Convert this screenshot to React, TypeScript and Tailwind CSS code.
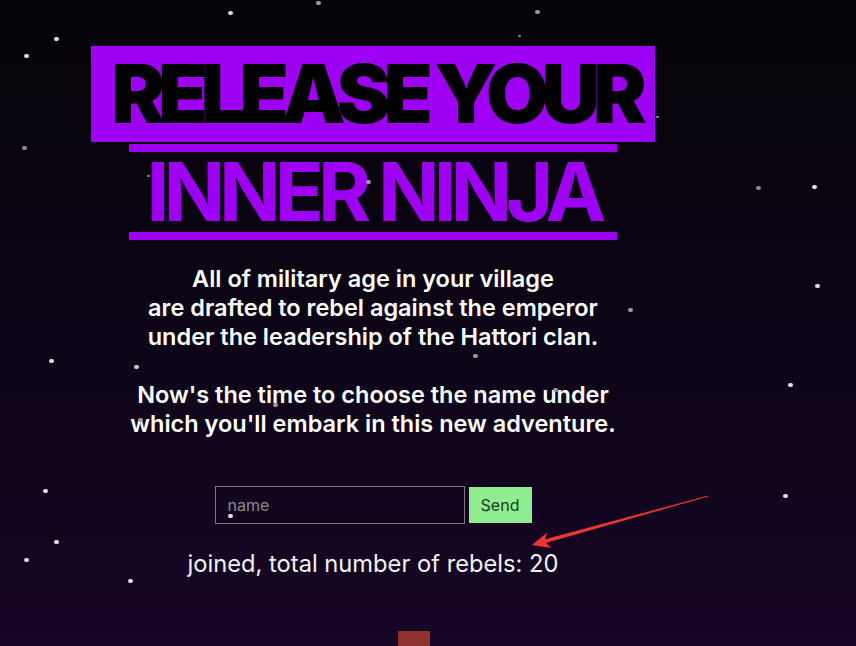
import React from "react";

const stars: [number, number, number, string][] = [
  [230, 13, 4, "#d8d8d8"],
  [318, 3, 4, "#9a9a9a"],
  [537, 12, 4, "#9a9a9a"],
  [56, 39, 4, "#dcdcdc"],
  [26, 56, 4, "#dcdcdc"],
  [519, 36, 2, "#8a8a8a"],
  [24, 148, 4, "#8a8a8a"],
  [148, 176, 2, "#8a8a8a"],
  [368, 182, 4, "#9a9a9a"],
  [657, 117, 2, "#8a8a8a"],
  [758, 188, 4, "#8a8a8a"],
  [814, 187, 4, "#e0e0e0"],
  [630, 310, 4, "#9a9a9a"],
  [817, 286, 4, "#e0e0e0"],
  [136, 367, 4, "#c8c8c8"],
  [51, 361, 4, "#e0e0e0"],
  [475, 356, 4, "#9a9a9a"],
  [275, 405, 4, "#9a9a9a"],
  [555, 390, 4, "#9a9a9a"],
  [140, 420, 4, "#9a9a9a"],
  [790, 385, 4, "#e0e0e0"],
  [45, 491, 4, "#e0e0e0"],
  [785, 496, 4, "#e0e0e0"],
  [230, 516, 4, "#e0e0e0"],
  [56, 542, 4, "#e0e0e0"],
  [26, 560, 4, "#e0e0e0"],
  [130, 581, 4, "#e0e0e0"],
];

export default function App() {
  return (
    <div className="relative h-[646px] w-full overflow-hidden bg-gradient-to-b from-[#050308] to-[#170626] font-['Inter',sans-serif] text-white">
      <main className="flex w-[746px] flex-col items-center pt-[46px]">
        <h1 className="flex flex-col items-center">
          <span className="block h-[96px] bg-[#9d00f2] pl-[20px] pr-[15px] text-[81px] font-black leading-[96px] tracking-[-0.089em] text-black">
            RELEASE YOUR
          </span>
          <span className="mt-[2px] block border-y-8 border-[#9d00f2] pl-[18px] pr-[17px] text-[81px] font-bold leading-[80px] tracking-[-0.075em] text-[#9d00f2]">
            INNER NINJA
          </span>
        </h1>
        <p className="mt-[24px] text-center text-[23.5px] font-semibold leading-[29px]">
          All of military age in your village
          <br />
          are drafted to rebel against the emperor
          <br />
          under the leadership of the Hattori clan.
        </p>
        <p className="mt-[29px] text-center text-[23.5px] font-semibold leading-[29px]">
          Now's the time to choose the name under
          <br />
          which you'll embark in this new adventure.
        </p>
        <form className="mt-[48px] flex items-center gap-[4px]" onSubmit={(e) => e.preventDefault()}>
          <input
            placeholder="name"
            className="h-[38px] w-[250px] border border-[#7a7a7a] bg-transparent px-[12px] text-[16px] text-white placeholder:text-[#8a8a8a] outline-none"
          />
          <button
            type="submit"
            className="h-[36px] w-[63px] bg-[#90ee90] text-[16px] text-[#1e3a1e]"
          >
            Send
          </button>
        </form>
        <p className="mt-[26px] text-[23.7px] font-normal leading-[28px] text-[#f2f2f2]">
          joined, total number of rebels: 20
        </p>
        <div className="ml-[398px] mt-[53px] h-[32px] w-[32px] self-start bg-[#8f3131]" />
      </main>

      {stars.map(([x, y, s, c], i) => (
        <span
          key={i}
          className="absolute rounded-full"
          style={{ left: x - s / 2, top: y - s / 2, width: s + 1, height: s, backgroundColor: c }}
        />
      ))}

      <svg className="pointer-events-none absolute left-0 top-0" width="856" height="646">
        <polygon
          points="532,545 547.2,532.5 545,539.3 708,495.6 708,496.4 546,543.1 551.4,547.9"
          fill="#ef3434"
        />
      </svg>
    </div>
  );
}
